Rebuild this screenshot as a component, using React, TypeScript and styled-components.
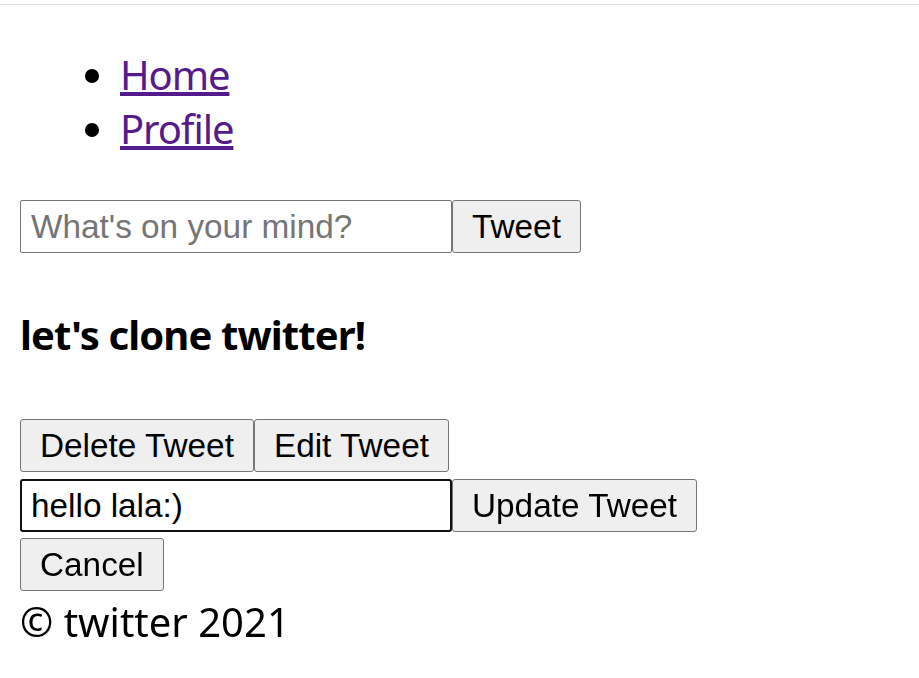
import React from "react";
import styled, { createGlobalStyle } from "styled-components";

const GlobalStyle = createGlobalStyle`
  html, body {
    margin: 0;
    padding: 0;
    background: #ffffff;
  }
  body {
    font-family: "Noto Sans", "Noto Sans CJK KR", sans-serif;
    color: #000000;
  }
`;

const TopRule = styled.div`
  height: 4px;
  border-bottom: 1px solid #dedede;
`;

const Page = styled.main`
  padding: 0 20px;
  display: flex;
  flex-direction: column;
  align-items: flex-start;
`;

const NavList = styled.ul`
  margin: 42.5px 0 0;
  padding: 0 0 0 100px;
  list-style: disc;
  font-size: 40px;
  line-height: 54px;
`;

const NavItem = styled.li``;

const NavLink = styled.a`
  color: #551a8b;
  text-decoration: underline;
  letter-spacing: -1.1px;
`;

const FormRow = styled.form<{ $top: number }>`
  display: flex;
  margin: ${(p) => p.$top}px 0 0;
`;

const TextInput = styled.input<{ $focused?: boolean }>`
  box-sizing: border-box;
  width: 432px;
  height: 53px;
  margin: 0;
  padding: 0 ${(p) => (p.$focused ? "9px" : "10px")};
  font-family: "Liberation Sans", Arial, sans-serif;
  font-size: 33.33px;
  color: #000000;
  background: #ffffff;
  border: ${(p) => (p.$focused ? "2px solid #101010" : "1px solid #767676")};
  border-radius: ${(p) => (p.$focused ? "3px" : "2px")};
  outline: none;
  &::placeholder {
    color: #757575;
  }
`;

const Button = styled.button`
  box-sizing: border-box;
  height: 53px;
  margin: 0;
  padding: 0 19px;
  font-family: "Liberation Sans", Arial, sans-serif;
  font-size: 33.33px;
  color: #000000;
  background: #efefef;
  border: 1px solid #767676;
  border-radius: 3px;
`;

const TweetTitle = styled.h4`
  margin: 54.5px 0 0;
  font-size: 40px;
  line-height: 54px;
  font-weight: 700;
  letter-spacing: -0.9px;
`;

const ButtonRow = styled.div<{ $top: number }>`
  display: flex;
  margin-top: ${(p) => p.$top}px;
`;

const Footer = styled.footer`
  margin-top: 3.5px;
  font-size: 40px;
  line-height: 54px;
`;

export default function App() {
  return (
    <>
      <GlobalStyle />
      <TopRule />
      <Page>
        <nav>
          <NavList>
            <NavItem>
              <NavLink href="#/">Home</NavLink>
            </NavItem>
            <NavItem>
              <NavLink href="#/profile">Profile</NavLink>
            </NavItem>
          </NavList>
        </nav>
        <FormRow $top={44.5} onSubmit={(e) => e.preventDefault()}>
          <TextInput type="text" placeholder="What's on your mind?" maxLength={120} />
          <Button type="submit">Tweet</Button>
        </FormRow>
        <TweetTitle>let's clone twitter!</TweetTitle>
        <ButtonRow $top={57.5}>
          <Button type="button">Delete Tweet</Button>
          <Button type="button">Edit Tweet</Button>
        </ButtonRow>
        <FormRow $top={7} onSubmit={(e) => e.preventDefault()}>
          <TextInput type="text" $focused defaultValue="hello lala:)" autoFocus />
          <Button type="submit">Update Tweet</Button>
        </FormRow>
        <ButtonRow $top={6}>
          <Button type="button">Cancel</Button>
        </ButtonRow>
        <Footer>© twitter 2021</Footer>
      </Page>
    </>
  );
}
